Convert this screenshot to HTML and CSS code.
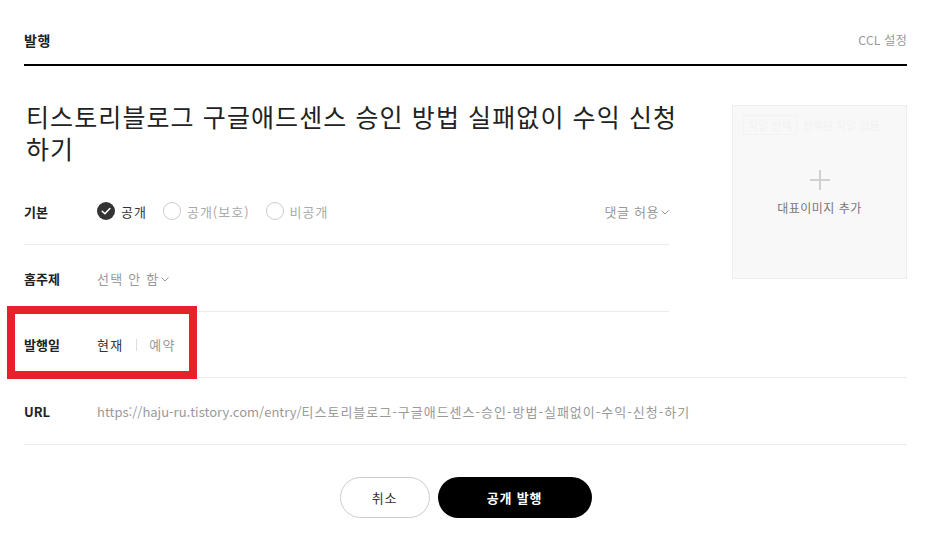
FILE: index.html
```html
<!DOCTYPE html>
<html lang="ko">
<head>
<meta charset="utf-8">
<link rel="stylesheet" href="styles.css">
</head>
<body>
<div class="layer">
  <header class="head">
    <h1 class="head-title">발행</h1>
    <span class="ccl">CCL 설정</span>
  </header>

  <div class="top">
    <div class="left">
      <h2 class="post-title">티스토리블로그 구글애드센스 승인 방법 실패없이 수익 신청 하기</h2>
      <div class="row row-short">
        <span class="label">기본</span>
        <div class="value opts">
          <span class="opt on"><span class="radio checked"><svg width="18" height="18" viewBox="0 0 18 18"><circle cx="9" cy="9" r="9" fill="#333"/><path d="M5.2 9.2 L7.9 11.8 L12.9 6.6" fill="none" stroke="#fff" stroke-width="1.5" stroke-linecap="round" stroke-linejoin="round"/></svg></span>공개</span>
          <span class="opt"><span class="radio"></span>공개(보호)</span>
          <span class="opt"><span class="radio"></span>비공개</span>
        </div>
        <span class="comment">댓글 허용<svg class="chev" width="8" height="5" viewBox="0 0 8 5"><path d="M0.5 0.5 L4 4 L7.5 0.5" fill="none" stroke="#999" stroke-width="1"/></svg></span>
      </div>
      <div class="row row-short">
        <span class="label">홈주제</span>
        <div class="value muted spaced">선택 안 함<svg class="chev" width="8" height="5" viewBox="0 0 8 5"><path d="M0.5 0.5 L4 4 L7.5 0.5" fill="none" stroke="#999" stroke-width="1"/></svg></div>
      </div>
    </div>
    <div class="thumb">
      <div class="file-ghost"><span class="file-btn">파일 선택</span>선택된 파일 없음</div>
      <svg class="plus" width="20" height="20" viewBox="0 0 20 20"><path d="M10 0 V20 M0 10 H20" stroke="#d0d0d0" stroke-width="2"/></svg>
      <span class="thumb-text">대표이미지 추가</span>
    </div>
  </div>

  <div class="row date-row">
    <span class="label">발행일</span>
    <div class="value date spaced">
      <span class="now">현재</span>
      <span class="sep"></span>
      <span class="muted">예약</span>
    </div>
    <div class="highlight"></div>
  </div>

  <div class="row">
    <span class="label">URL</span>
    <div class="value url">https://haju-ru.tistory.com/entry/<span class="ko">티스토리블로그-구글애드센스-승인-방법-실패없이-수익-신청-하기</span></div>
  </div>

  <div class="actions">
    <button class="btn btn-cancel">취소</button>
    <button class="btn btn-publish">공개 발행</button>
  </div>
</div>
</body>
</html>
```

FILE: styles.css
```css
* { box-sizing: border-box; }
html, body { margin: 0; padding: 0; background: #fff; }
body {
  font-family: "Noto Sans CJK KR", "Noto Sans", sans-serif;
  color: #333;
  width: 935px;
  height: 545px;
  overflow: hidden;
}
.layer {
  padding: 0 28px 0 24px;
  position: relative;
}
.head {
  display: flex;
  justify-content: space-between;
  align-items: center;
  height: 66px;
  border-bottom: 2px solid #000;
  padding-top: 24px;
  padding-bottom: 8px;
}
.head-title {
  margin: 0;
  font-size: 14px;
  font-weight: 700;
  color: #222;
  line-height: 20px;
  letter-spacing: 0.5px;
}
.ccl {
  font-size: 12px;
  color: #999;
  line-height: 20px;
  letter-spacing: 0.3px;
}
.top {
  display: flex;
  justify-content: space-between;
}
.left {
  width: 645px;
}
.post-title {
  margin: 34px -30px 14px 0;
  font-size: 25px;
  font-weight: 400;
  line-height: 32px;
  color: #222;
  letter-spacing: 1.1px;
  word-break: keep-all;
  padding-left: 2px;
}
.row {
  display: flex;
  align-items: center;
  height: 67px;
  border-bottom: 1px solid #ebebeb;
  font-size: 13px;
}
.label {
  width: 73px;
  flex: none;
  font-weight: 700;
  color: #222;
  font-size: 13px;
}
.value {
  display: flex;
  align-items: center;
}
.spaced { letter-spacing: 1.2px; }
.muted { color: #999; }
.chev { margin-left: 2px; margin-top: 2px; }
.opts { flex: 1; }
.opt {
  display: inline-flex;
  align-items: center;
  color: #aaa;
  margin-right: 16px;
  letter-spacing: 1px;
}
.opt.on { color: #333; }
.radio {
  width: 18px;
  height: 18px;
  border-radius: 50%;
  border: 1px solid #ccc;
  margin-right: 6px;
  display: inline-block;
}
.radio.checked { border: 0; }
.radio svg { display: block; }
.comment {
  color: #999;
  display: inline-flex;
  align-items: center;
  letter-spacing: 0.6px;
}
.thumb {
  width: 175px;
  height: 174px;
  margin-top: 39px;
  background: #f8f8f8;
  border: 1px solid #efefef;
  position: relative;
  display: flex;
  flex-direction: column;
  align-items: center;
  justify-content: center;
  gap: 10px;
}
.file-ghost {
  position: absolute;
  top: 9px;
  left: 10px;
  font-size: 11px;
  color: #f2f2f2;
  white-space: nowrap;
  display: flex;
  align-items: center;
  gap: 6px;
}
.file-btn {
  border: 1px solid #f3f3f3;
  padding: 1px 4px;
}
.plus { display: block; margin-top: 2px; }
.thumb-text {
  font-size: 12px;
  color: #777;
  line-height: 16px;
  letter-spacing: 0.5px;
}
.date-row {
  position: relative;
  height: 66px;
}
.now { color: #333; }
.sep {
  width: 1px;
  height: 12px;
  background: #ddd;
  margin: 0 12px 0 13px;
}
.highlight {
  position: absolute;
  left: -17px;
  top: -6px;
  width: 190px;
  height: 73px;
  border: 8px solid #e8202a;
  pointer-events: none;
}
.url {
  color: #999;
  font-size: 13px;
  white-space: nowrap;
}
.url .ko { letter-spacing: 1px; }
.actions {
  display: flex;
  justify-content: center;
  gap: 8px;
  padding-top: 32px;
}
.btn {
  font-family: inherit;
  font-size: 13px;
  height: 41px;
  border-radius: 21px;
  cursor: pointer;
  letter-spacing: 0.8px;
}
.btn-cancel {
  width: 90px;
  background: #fff;
  border: 1px solid #ccc;
  color: #333;
}
.btn-publish {
  width: 154px;
  background: #000;
  border: 0;
  color: #fff;
  font-weight: 700;
}
```
